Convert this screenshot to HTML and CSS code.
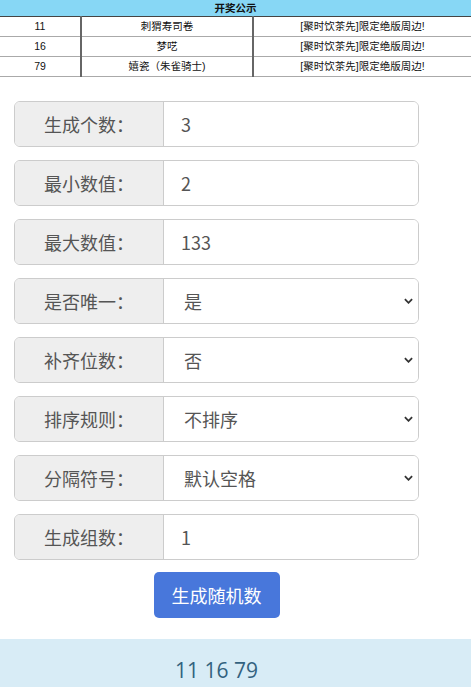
FILE: index.html
```html
<!DOCTYPE html>
<html lang="zh">
<head>
<meta charset="utf-8">
<title>随机数生成</title>
<link rel="stylesheet" href="styles.css">
</head>
<body>
<table class="notice">
  <thead>
    <tr><th colspan="3">开奖公示</th></tr>
  </thead>
  <tbody>
    <tr><td class="c1">11</td><td class="c2">刺猬寿司卷</td><td class="c3">[聚时饮茶先]限定绝版周边!</td></tr>
    <tr><td class="c1">16</td><td class="c2">梦呓</td><td class="c3">[聚时饮茶先]限定绝版周边!</td></tr>
    <tr><td class="c1">79</td><td class="c2">嬉瓷（朱雀骑士)</td><td class="c3">[聚时饮茶先]限定绝版周边!</td></tr>
  </tbody>
</table>

<div class="form">
  <div class="group"><span class="label">生成个数：</span><span class="field">3</span></div>
  <div class="group"><span class="label">最小数值：</span><span class="field">2</span></div>
  <div class="group"><span class="label">最大数值：</span><span class="field">133</span></div>
  <div class="group"><span class="label">是否唯一：</span><span class="field select">是<svg class="caret" viewBox="0 0 10 6" width="9" height="6"><path d="M1 1 L5 5 L9 1" fill="none" stroke="#333" stroke-width="2"/></svg></span></div>
  <div class="group"><span class="label">补齐位数：</span><span class="field select">否<svg class="caret" viewBox="0 0 10 6" width="9" height="6"><path d="M1 1 L5 5 L9 1" fill="none" stroke="#333" stroke-width="2"/></svg></span></div>
  <div class="group"><span class="label">排序规则：</span><span class="field select">不排序<svg class="caret" viewBox="0 0 10 6" width="9" height="6"><path d="M1 1 L5 5 L9 1" fill="none" stroke="#333" stroke-width="2"/></svg></span></div>
  <div class="group"><span class="label">分隔符号：</span><span class="field select">默认空格<svg class="caret" viewBox="0 0 10 6" width="9" height="6"><path d="M1 1 L5 5 L9 1" fill="none" stroke="#333" stroke-width="2"/></svg></span></div>
  <div class="group"><span class="label">生成组数：</span><span class="field">1</span></div>
  <div class="actions"><button class="btn">生成随机数</button></div>
</div>

<div class="result"><span class="result-text">11 16 79</span></div>
</body>
</html>
```

FILE: styles.css
```css
html, body {
  margin: 0;
  padding: 0;
  background: #fff;
}
body {
  font-family: "Noto Sans CJK SC", "Noto Sans", sans-serif;
  color: #555;
}
.notice {
  width: 100%;
  border-collapse: collapse;
  font-family: "Liberation Sans", "Noto Sans CJK SC", sans-serif;
  font-size: 10.5px;
  color: #111;
}
.notice th {
  background: #87d7f5;
  height: 16px;
  padding: 0;
  font-weight: bold;
  font-size: 10.5px;
  border-bottom: 1px solid #444;
  line-height: 16px;
}
.notice td {
  height: 19px;
  padding: 0;
  text-align: center;
  border-bottom: 1px solid #aaa;
  line-height: 19px;
}
.notice td.c1 { width: 80px; border-right: 2px solid #666; }
.notice td.c2 { width: 170px; border-right: 2px solid #666; }
.notice td.c3 { text-align: center; }

.form {
  width: 405px;
  margin: 24px 0 0 14px;
  display: flex;
  flex-direction: column;
  gap: 13px;
}
.group {
  display: flex;
  height: 46px;
  box-sizing: border-box;
  border: 1px solid #ccc;
  border-radius: 6px;
  overflow: hidden;
  font-size: 18px;
}
.label {
  width: 148px;
  flex: none;
  background: #eee;
  border-right: 1px solid #ccc;
  display: flex;
  align-items: center;
  justify-content: center;
  color: #555;
}
.field {
  flex: 1;
  display: flex;
  align-items: center;
  padding-left: 17px;
  padding-right: 5px;
  color: #555;
  background: #fff;
}
.field.select {
  padding-left: 20px;
  justify-content: space-between;
}
.caret { flex: none; }
.actions {
  display: flex;
  justify-content: center;
  margin-top: -1px;
}
.btn {
  width: 126px;
  height: 46px;
  border: none;
  border-radius: 5px;
  background: #4877db;
  color: #fff;
  font-family: "Noto Sans CJK SC", sans-serif;
  font-size: 18px;
  padding: 0;
}
.result {
  margin-top: 21px;
  background: #d8ecf6;
  height: 49px;
  box-sizing: border-box;
  padding: 0 52px 0 14px;
  display: flex;
  align-items: center;
  justify-content: center;
}
.result-text {
  font-family: "Open Sans", "Noto Sans", sans-serif;
  font-size: 21px;
  color: #33627f;
  padding-top: 12px;
}
```
